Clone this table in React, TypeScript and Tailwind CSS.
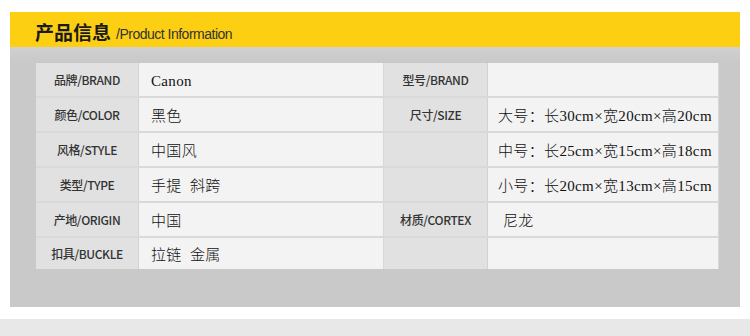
const labelFont = { fontFamily: '"Noto Sans CJK SC", "Liberation Sans", sans-serif' }

interface Row {
  l1: string
  v1: string
  l2: string
  v2: string
}

const rows: Row[] = [
  { l1: "品牌/BRAND", v1: "Canon", l2: "型号/BRAND", v2: "" },
  { l1: "颜色/COLOR", v1: "黑色", l2: "尺寸/SIZE", v2: "大号：长30cm×宽20cm×高20cm" },
  { l1: "风格/STYLE", v1: "中国风", l2: "", v2: "中号：长25cm×宽15cm×高18cm" },
  { l1: "类型/TYPE", v1: "手提  斜跨", l2: "", v2: "小号：长20cm×宽13cm×高15cm" },
  { l1: "产地/ORIGIN", v1: "中国", l2: "材质/CORTEX", v2: "尼龙" },
  { l1: "扣具/BUCKLE", v1: "拉链  金属", l2: "", v2: "" },
]

function LabelCell({ text }: { text: string }) {
  return (
    <div
      className="flex items-center justify-center bg-[#e1e1e1] border-r border-[#d2d2d2] text-[12px] font-medium text-[#333] tracking-[-0.4px]"
      style={labelFont}
    >
      {text}
    </div>
  )
}

function ValueCell({ text, pad }: { text: string; pad: string }) {
  return (
    <div
      className={`flex items-center bg-[#f3f3f3] border-r border-[#d8d8d8] text-[15px] font-light text-[#111] tracking-[0.35px] whitespace-pre ${pad}`}
      style={{ fontFamily: '"Liberation Serif", "Noto Sans CJK SC", serif' }}
    >
      {text}
    </div>
  )
}

export default function App() {
  return (
    <div className="w-[750px] h-[336px] bg-white overflow-hidden">
      <div className="pt-3 px-[10px]">
        <div className="h-[35px] bg-[#fccf12] flex items-center pl-[25px] pt-[4px]">
          <span
            className="text-[19px] font-bold text-[#1a1a1a] leading-none"
            style={labelFont}
          >
            产品信息
          </span>
          <span
            className="ml-[5px] mt-[4px] text-[14px] text-[#333] tracking-[-0.5px] leading-none"
            style={{ fontFamily: '"Liberation Sans", Arial, sans-serif' }}
          >
            /Product Information
          </span>
        </div>
        <div className="h-[260px] bg-gradient-to-b from-[#d2d0d2] from-0% to-[#c9c9c9] to-[6%] pl-[26px] pt-4">
          <div className="w-[683px] flex flex-col">
            {rows.map((r, i) => (
              <div
                key={i}
                className={`grid grid-cols-[103px_245px_104px_231px] ${
                  i === rows.length - 1 ? "h-[31px]" : "h-[35px] border-b-2 border-[#d9d9d9]"
                }`}
              >
                <LabelCell text={r.l1} />
                <ValueCell text={r.v1} pad="pl-[12px] pt-[3px]" />
                <LabelCell text={r.l2} />
                <ValueCell text={r.v2} pad={r.v2 === "尼龙" ? "pl-[15px] pt-[3px]" : "pl-[10px] pt-[3px]"} />
              </div>
            ))}
          </div>
        </div>
      </div>
      <div className="mt-[12px] h-[17px] bg-[#e8e8e8]" />
    </div>
  )
}
